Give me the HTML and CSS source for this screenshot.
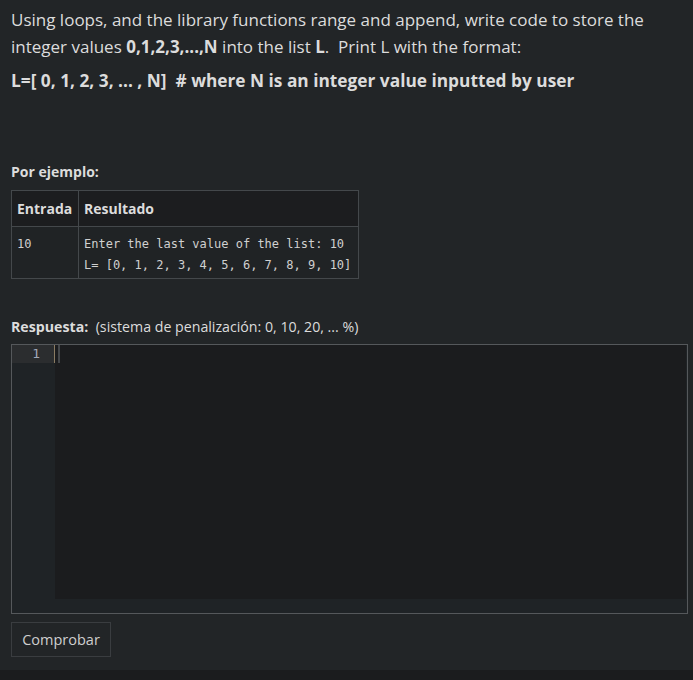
FILE: index.html
```html
<!DOCTYPE html>
<html lang="es">
<head>
<meta charset="utf-8">
<link rel="stylesheet" href="styles.css">
</head>
<body>
<div class="page">
  <div class="qtext">
    <p class="intro">Using loops, and the library functions range and append, write code to store the integer values <b>0,1,2,3,...,N</b> into the list <b>L</b>.&nbsp; Print L with the format:</p>
    <p class="format">L=[ 0, 1, 2, 3, ... , N]&nbsp; # where N is an integer value inputted by user</p>
  </div>
  <h4 class="example-title">Por ejemplo:</h4>
  <table class="examples">
    <thead>
      <tr><th class="col-in">Entrada</th><th class="col-out">Resultado</th></tr>
    </thead>
    <tbody>
      <tr>
        <td class="col-in"><pre>10</pre></td>
        <td class="col-out"><pre>Enter the last value of the list: 10
L= [0, 1, 2, 3, 4, 5, 6, 7, 8, 9, 10]</pre></td>
      </tr>
    </tbody>
  </table>
  <div class="answer-label"><b>Respuesta:</b>&nbsp; (sistema de penalización: 0, 10, 20, ... %)</div>
  <div class="editor">
    <div class="editor-body">
      <div class="gutter">
        <div class="gutter-line active">1</div>
      </div>
      <div class="code">
        <div class="code-line"><span class="cursor"></span></div>
      </div>
    </div>
    <div class="hscroll"></div>
  </div>
  <button class="check-btn" type="button">Comprobar</button>
</div>
<div class="footer-strip"></div>
</body>
</html>
```
FILE: styles.css
```css
html, body {
  margin: 0;
  padding: 0;
  background: #222527;
}
body {
  font-family: "Open Sans", "Noto Sans", sans-serif;
  color: #dcdcdc;
  height: 680px;
  display: flex;
  flex-direction: column;
  overflow: hidden;
}
.page {
  padding: 6px 5px 0 11px;
  flex: 1;
}
.qtext p {
  margin: 0;
}
.intro {
  font-size: 17px;
  line-height: 27px;
}
.format {
  font-size: 17.3px;
  font-weight: bold;
  line-height: 27px;
  margin-top: 7px !important;
}
.example-title {
  font-size: 14px;
  font-weight: bold;
  line-height: 20px;
  margin: 68px 0 8px 0;
}
.examples {
  border-collapse: collapse;
  font-size: 14px;
}
.examples th,
.examples td {
  border: 1px solid #44484b;
  text-align: left;
  vertical-align: top;
}
.examples th {
  background: #1c1d1f;
  height: 35px;
  padding: 0 5px;
  font-weight: bold;
  vertical-align: middle;
}
.examples td {
  background: #202325;
  padding: 7px 5px 2px 5px;
}
.examples .col-in {
  width: 56px;
}
.examples .col-out {
  padding-right: 7px;
}
.examples pre {
  margin: 0;
  font-family: "DejaVu Sans Mono", monospace;
  font-size: 12px;
  line-height: 21px;
  color: #d0d0d0;
}
.answer-label {
  font-size: 14.2px;
  line-height: 20px;
  margin-top: 38px;
}
.answer-label b {
  font-weight: bold;
}
.editor {
  margin-top: 7px;
  border: 1px solid #55585b;
  height: 268px;
  display: flex;
  flex-direction: column;
  background: #1f2326;
}
.editor-body {
  flex: 1;
  display: flex;
}
.gutter {
  width: 43px;
  background: #1f2326;
}
.gutter-line {
  height: 18px;
  line-height: 18px;
  text-align: right;
  padding-right: 14px;
  font-family: "DejaVu Sans Mono", monospace;
  font-size: 13px;
  color: #a0a8b8;
}
.gutter-line.active {
  background: #2b2d2f;
  border-right: 1px solid #8a7b62;
}
.code {
  flex: 1;
  background: #1b1c1e;
  margin-right: 1px;
}
.code-line {
  height: 18px;
  padding-left: 3px;
}
.cursor {
  display: inline-block;
  width: 2px;
  height: 18px;
  background: #45484b;
}
.hscroll {
  height: 14px;
  background: #1f2326;
}
.check-btn {
  margin-top: 8px;
  width: 100px;
  height: 35px;
  background: #222527;
  border: 1px solid #3a3d40;
  color: #cfcfcf;
  font-family: "Open Sans", "Noto Sans", sans-serif;
  font-size: 14.5px;
  padding: 0;
}
.footer-strip {
  height: 10px;
  background: #1b1c1e;
}
```
